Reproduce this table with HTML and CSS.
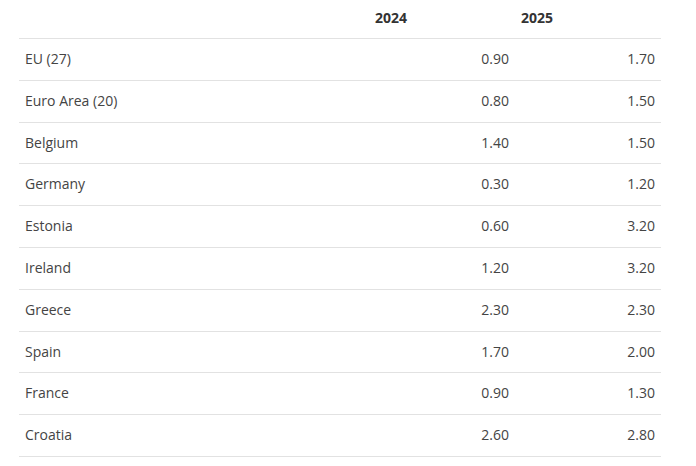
FILE: index.html
```
<!DOCTYPE html>
<html lang="en">
<head>
<meta charset="utf-8">
<title>Growth forecast</title>
<link rel="stylesheet" href="styles.css">
</head>
<body>
<div class="wrap">
<table class="data">
<thead>
<tr><th class="name"></th><th class="yr">2024</th><th class="yr">2025</th></tr>
</thead>
<tbody>
<tr><td class="name">EU (27)</td><td class="num">0.90</td><td class="num">1.70</td></tr>
<tr><td class="name">Euro Area (20)</td><td class="num">0.80</td><td class="num">1.50</td></tr>
<tr><td class="name">Belgium</td><td class="num">1.40</td><td class="num">1.50</td></tr>
<tr><td class="name">Germany</td><td class="num">0.30</td><td class="num">1.20</td></tr>
<tr><td class="name">Estonia</td><td class="num">0.60</td><td class="num">3.20</td></tr>
<tr><td class="name">Ireland</td><td class="num">1.20</td><td class="num">3.20</td></tr>
<tr><td class="name">Greece</td><td class="num">2.30</td><td class="num">2.30</td></tr>
<tr><td class="name">Spain</td><td class="num">1.70</td><td class="num">2.00</td></tr>
<tr><td class="name">France</td><td class="num">0.90</td><td class="num">1.30</td></tr>
<tr><td class="name">Croatia</td><td class="num">2.60</td><td class="num">2.80</td></tr>
</tbody>
</table>
</div>
</body>
</html>
```
FILE: styles.css
```
html, body {
  margin: 0;
  padding: 0;
  background: #ffffff;
}
body {
  font-family: "Open Sans", "Liberation Sans", sans-serif;
  font-size: 14px;
  color: #444444;
}
.wrap {
  padding-left: 19px;
}
.data {
  width: 642px;
  border-collapse: collapse;
  table-layout: fixed;
}
.data th, .data td {
  padding: 0 6px;
  line-height: 19px;
}
.data th {
  font-weight: 700;
  color: #333333;
  text-align: left;
  padding-top: 8px;
  padding-bottom: 11px;
  border-bottom: 1px solid #e2e2e2;
}
.data th.name { width: 338px; }
.data th.yr { width: 134px; }
.data td {
  padding-top: 10px;
  padding-bottom: 11.8px;
  border-bottom: 1px solid #e2e2e2;
  vertical-align: middle;
}
.data td.num {
  text-align: right;
}
```
